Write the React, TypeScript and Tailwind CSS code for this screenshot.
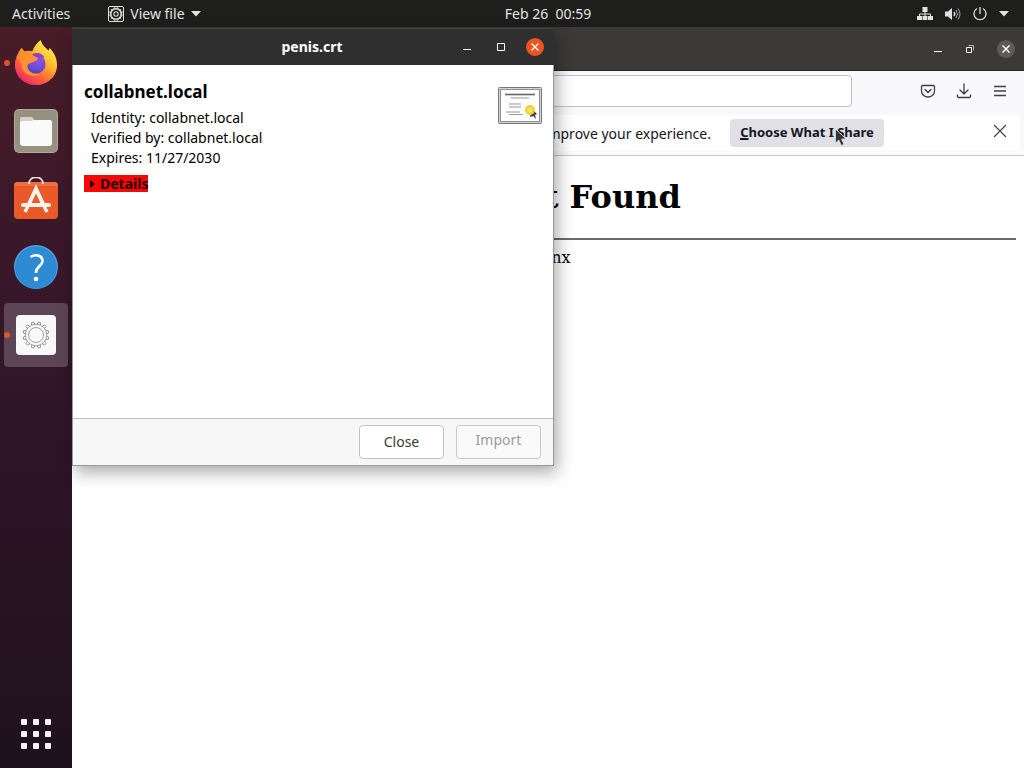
import type { ReactNode } from "react";

const gearTeeth = [0, 30, 60, 90, 120, 150, 180, 210, 240, 270, 300, 330];

function Gear({ className, stroke, body }: { className: string; stroke: number; body: number }) {
  return (
    <svg viewBox="0 0 32 32" className={className} fill="none" stroke="currentColor" strokeWidth={stroke}>
      <circle cx="16" cy="16" r="11.5" />
      <circle cx="16" cy="16" r={body} />
      {gearTeeth.map((a) => (
        <path key={a} d="M14.2 4.6 L14.8 2 H17.2 L17.8 4.6" transform={`rotate(${a + 15} 16 16)`} />
      ))}
    </svg>
  );
}

function FirefoxIcon() {
  return (
    <svg viewBox="0 0 46 48" className="h-[46px] w-11">
      <defs>
        <linearGradient id="ffBody" x1="0.8" y1="0.1" x2="0.2" y2="0.95">
          <stop offset="0" stopColor="#fff04a" />
          <stop offset="0.35" stopColor="#ffb52b" />
          <stop offset="0.65" stopColor="#ff6a33" />
          <stop offset="1" stopColor="#f0246f" />
        </linearGradient>
        <radialGradient id="ffGlobe" cx="0.6" cy="0.2" r="0.9">
          <stop offset="0" stopColor="#a34ce8" />
          <stop offset="0.6" stopColor="#6a4fd8" />
          <stop offset="1" stopColor="#4a3bb0" />
        </radialGradient>
        <linearGradient id="ffHead" x1="0" y1="0" x2="1" y2="1">
          <stop offset="0" stopColor="#ff8a2a" />
          <stop offset="1" stopColor="#ff9b33" />
        </linearGradient>
      </defs>
      <path
        d="M28 0c1 5 5 8 8 11 1-1 1-2 1-3 5 5 8 11 8 18 0 12-10 21-22 21S1 38 1 26c0-6 2-11 6-15l1-3c1 2 2 3 3 4 3-1 6-1 8 0 2-5 5-9 9-12z"
        fill="url(#ffBody)"
      />
      <circle cx="23" cy="25" r="10" fill="url(#ffGlobe)" />
      <path d="M17 16c5-4 13-3 15 3-4-2-6-1-7 1z" fill="#8b3fd9" />
      <path
        d="M3 18c1-4 3-8 5-10 1 2 3 4 4 4 4-1 6 1 8 4 2 2 5 2 5 3 0 2-3 3-5 4-3 1-6 2-6 4 0 7 7 10 13 8-6 5-18 2-19-8-1-5-3-7-5-9z"
        fill="url(#ffHead)"
      />
    </svg>
  );
}

function FilesIcon() {
  return (
    <svg viewBox="0 0 44 44" className="size-11">
      <rect width="44" height="44" rx="5" fill="#b0aa9a" />
      <rect x="1" y="1" width="42" height="42" rx="4" fill="#969080" />
      <path d="M6 10q0-2 2-2h10l3 4h-2v6H6z" fill="#d5d1c7" />
      <path d="M6 14q0-2 2-2h9l3-1h16q2 0 2 2v21q0 3-3 3H9q-3 0-3-3z" fill="#fafafa" />
    </svg>
  );
}

function SoftwareIcon() {
  return (
    <svg viewBox="0 0 44 44" className="size-11">
      <rect y="5" width="44" height="37" rx="4" fill="#e9592a" />
      <path d="M0 9q0-4 4-4h36q4 0 4 4z" fill="#ef7046" />
      <path d="M15 7c0-9 14-9 14 0" fill="none" stroke="#f3d9cd" strokeWidth="2" />
      <g fill="none" stroke="#fdf1ec" strokeWidth="4">
        <path d="M14 29 22 12l8 17" />
        <path d="M9 28h26" strokeLinecap="round" strokeWidth="4" />
        <path d="m14 29-3 6M30 29l3 6" strokeWidth="3.5" />
      </g>
    </svg>
  );
}

function HelpIcon() {
  return (
    <svg viewBox="0 0 44 44" className="size-11">
      <circle cx="22" cy="22" r="22" fill="#4fa6e4" />
      <circle cx="22" cy="22.5" r="21" fill="#2c8bd3" />
      <path d="M16.500 12c5-3 12-2 12 4 0 5-7 6-6.500 12" fill="none" stroke="#fff" strokeWidth="2.600" />
      <circle cx="22" cy="34" r="2.300" fill="#fff" />
    </svg>
  );
}

function CertificateIcon() {
  return (
    <svg viewBox="0 0 44 38" className="h-[38px] w-11 shrink-0">
      <rect x="0.5" y="0.5" width="43" height="36" rx="1" fill="#d4d4d4" stroke="#777" />
      <rect x="2.5" y="2.5" width="39" height="32" fill="#fcfcfc" stroke="#909090" />
      <path d="M7 7.500h30" stroke="#666" strokeWidth="1.600" />
      <path d="M13 11h18M11 17h12M11 20h12M8 25h14M11 27.500h14" stroke="#999" />
      <path d="m33 24-1 6 3-1 3 3-1-4 2-1-4-4z" fill="#34405c" />
      <circle cx="32" cy="23" r="5" fill="#f2d22e" />
      <circle cx="32" cy="23" r="2.500" fill="#f8e268" />
    </svg>
  );
}

function DockItem({ label, active, running, children }: { label: string; active?: boolean; running?: boolean; children: ReactNode }) {
  return (
    <button
      aria-label={label}
      className={`relative flex size-16 items-center justify-center rounded ${active ? "bg-[#5c4656]" : ""}`}
    >
      {running && <span className="absolute left-0 top-[29px] size-[6px] rounded-full bg-[#e0522a]" />}
      {children}
    </button>
  );
}

function TopBar() {
  return (
    <header className="grid h-[27px] shrink-0 grid-cols-[1fr_auto_1fr] items-center bg-[#1e1e1d] pl-[72px] text-sm text-[#e2e2e2]">
      <div className="-ml-[60px] flex items-center gap-[38px]">
        <button>Activities</button>
        <button className="flex items-center gap-[6px]">
          <span className="flex size-4 items-center justify-center rounded-xs border border-[#e2e2e2]">
            <Gear className="size-[14px]" stroke={2.4} body={5} />
          </span>
          View file
          <svg viewBox="0 0 10 6" className="h-[6px] w-[10px] fill-current"><path d="M0 0h10L5 5.500z" /></svg>
        </button>
      </div>
      <button className="whitespace-pre">Feb 26  00:59</button>
      <button aria-label="System" className="mr-[15px] flex items-center gap-3 justify-self-end">
        <svg viewBox="0 0 16 14" className="h-[14px] w-4" fill="currentColor">
          <path d="M5.500 0h5v5h-5zM0 9h5v4H0zM5.600 9h4.800v4H5.600zM11 9h5v4h-5z" />
          <path d="M8 4v5M2.500 10V7h11v3" fill="none" stroke="currentColor" />
        </svg>
        <svg viewBox="0 0 16 14" className="h-[14px] w-4" fill="none" stroke="currentColor">
          <path d="M0 4.500h3L7 1v12L3 9.500H0z" fill="currentColor" stroke="none" />
          <path d="M9 5q1.500 2 0 4" strokeWidth="1.500" />
          <path d="M11 3q3 4 0 8M13 1.500q4 5.500 0 11" opacity="0.7" />
        </svg>
        <svg viewBox="0 0 14 14" className="size-[14px]" fill="none" stroke="currentColor" strokeWidth="1.300">
          <path d="M7 0v7M4 1.500a6 6 0 1 0 6 0" />
        </svg>
        <svg viewBox="0 0 10 6" className="h-[6px] w-[10px] fill-current"><path d="M0 0h10L5 5.500z" /></svg>
      </button>
    </header>
  );
}

function Dock() {
  return (
    <nav className="flex w-[72px] shrink-0 flex-col items-center gap-1 bg-linear-to-b from-[#481c28] via-[#301529] via-50% to-[#1f111d] pb-[2px] pt-1">
      <DockItem label="Firefox" running><FirefoxIcon /></DockItem>
      <DockItem label="Files"><FilesIcon /></DockItem>
      <DockItem label="Software"><SoftwareIcon /></DockItem>
      <DockItem label="Help"><HelpIcon /></DockItem>
      <DockItem label="View file" active running>
        <span className="flex size-10 items-center justify-center rounded bg-[#f8f8f8] text-[#8d918d]">
          <Gear className="size-[30px]" stroke={0.9} body={8} />
        </span>
      </DockItem>
      <button aria-label="Show Applications" className="mt-auto flex size-16 items-center justify-center">
        <svg viewBox="0 0 30 30" className="size-[30px] fill-[#faf0f7]">
          {[0, 12, 24].map((y) => [0, 12, 24].map((x) => <rect key={`${x}-${y}`} x={x} y={y} width="6" height="6" rx="1" />))}
        </svg>
      </button>
    </nav>
  );
}

function Browser() {
  return (
    <main className="flex min-w-0 flex-1 flex-col bg-white">
      <div className="flex h-11 items-center justify-end gap-[22px] border-b border-[#242424] bg-[#3b3a39] pr-[9px] text-white">
        <button aria-label="Minimize">
          <svg viewBox="0 0 10 10" className="size-[10px]" stroke="currentColor"><path d="M1 7.500h8" /></svg>
        </button>
        <button aria-label="Restore">
          <svg viewBox="0 0 10 10" className="size-[10px]" fill="none" stroke="currentColor">
            <path d="M1.500 3.500h5v5h-5z" />
            <path d="M3.500 1.500h5v5" opacity="0.6" />
          </svg>
        </button>
        <button aria-label="Close window" className="flex size-[18px] items-center justify-center rounded-full bg-[#5d5c5a]">
          <svg viewBox="0 0 8 8" className="size-2" stroke="currentColor" strokeWidth="1.500"><path d="m0.500 0.500 7 7m0-7-7 7" /></svg>
        </button>
      </div>

      <div className="flex h-10 items-center bg-[#f9f9fb] pr-4 text-[#3f3f46]">
        <input aria-label="Address" className="ml-40 mr-17 h-8 min-w-0 flex-1 rounded border border-[#c2c2c4] bg-white px-2" />
        <div className="flex items-center gap-5">
          <button aria-label="Save to Pocket">
            <svg viewBox="0 0 16 16" className="size-4" fill="none" stroke="currentColor" strokeWidth="1.300" strokeLinecap="round" strokeLinejoin="round">
              <path d="M2.500 2.500h11q1 0 1 1V8a6.500 6 0 0 1-13 0V3.500q0-1 1-1z" />
              <path d="m5 6.500 3 3 3-3" />
            </svg>
          </button>
          <button aria-label="Downloads">
            <svg viewBox="0 0 16 16" className="size-4" fill="none" stroke="currentColor" strokeWidth="1.300" strokeLinecap="round" strokeLinejoin="round">
              <path d="M8 1v10M4 7l4 4 4-4M1.500 12v1.500q0 1 1 1h11q1 0 1-1V12" />
            </svg>
          </button>
          <button aria-label="Menu">
            <svg viewBox="0 0 16 16" className="size-4" stroke="currentColor" strokeWidth="1.300"><path d="M2 3.500h12M2 8h12M2 12.500h12" /></svg>
          </button>
        </div>
      </div>

      <div className="border-b border-[#c8c8ca] bg-[#f9f9fb] px-1 pb-1 pt-1">
        <div className="flex h-9 items-center rounded bg-white pr-[13px] text-[#15141a]">
          <div className="flex w-[635px] min-w-0 justify-end overflow-hidden whitespace-nowrap pt-px text-sm">
            improve your experience.
          </div>
          <button className="relative ml-[19px] h-7 w-[154px] shrink-0 whitespace-nowrap rounded bg-[#e0e0e6] text-[13px] font-bold">
            <span className="underline decoration-2">C</span>hoose What I Share
            <svg viewBox="0 0 12 18" className="absolute left-[105px] top-[9px] h-[18px] w-3">
              <path d="M0.500 1v14l3.300-3 2.500 5.500 2.600-1.200L6.500 11H11z" fill="#333" stroke="#ddd" strokeWidth="0.800" />
            </svg>
          </button>
          <button aria-label="Dismiss" className="-mt-1 ml-auto text-[#444]">
            <svg viewBox="0 0 14 14" className="size-[14px]" stroke="currentColor" strokeWidth="1.200"><path d="m1 1 12 12m0-12L1 13" /></svg>
          </button>
        </div>
      </div>

      <div className="px-2 pt-[21px] font-[DejaVu_Serif,serif] text-black">
        <h1 className="text-center text-[32px] font-bold leading-10">404 Not Found</h1>
        <hr className="mt-[21px] border-t-2 border-[#6b6b6b]" />
        <p className="mt-2 text-center text-base leading-5">nginx</p>
      </div>
    </main>
  );
}

function CertificateDialog() {
  return (
    <section
      role="dialog"
      aria-label="penis.crt"
      className="absolute left-[72px] top-[1px] flex h-[438px] w-[482px] flex-col border border-t-0 border-[#999] bg-white text-black shadow-[3px_6px_16px_rgba(0,0,0,0.35)]"
    >
      <div className="-mx-px flex h-[37px] shrink-0 items-center border-t border-[#454443] bg-[#302f2f] pr-[10px] text-white">
        <h2 className="flex-1 pl-[90px] text-center text-sm font-bold">penis.crt</h2>
        <div className="flex items-center gap-6">
          <button aria-label="Minimize">
            <svg viewBox="0 0 10 10" className="size-[10px]" stroke="currentColor"><path d="M1 7.500h8" /></svg>
          </button>
          <button aria-label="Maximize">
            <svg viewBox="0 0 10 10" className="size-[10px]" fill="none" stroke="currentColor"><path d="M1.500 1.500h7v7h-7z" /></svg>
          </button>
          <button aria-label="Close window" className="-ml-1 flex size-[18px] items-center justify-center rounded-full bg-[#e95420]">
            <svg viewBox="0 0 8 8" className="size-2" stroke="currentColor" strokeWidth="1.300"><path d="m0.500 0.500 7 7m0-7-7 7" /></svg>
          </button>
        </div>
      </div>

      <div className="flex flex-1 items-start justify-between px-[11px] pt-[15px]">
        <div>
          <h3 className="text-[17px] font-bold leading-6">collabnet.local</h3>
          <div className="mt-1 pl-[7px] text-sm leading-5">
            <p>Identity: collabnet.local</p>
            <p>Verified by: collabnet.local</p>
            <p>Expires: 11/27/2030</p>
          </div>
          <button className="mt-[7px] flex h-[17px] items-center gap-1 bg-[#f40808] pl-[6px] text-sm font-bold leading-4 text-[#220000]">
            <svg viewBox="0 0 6 8" className="h-2 w-[6px] fill-current"><path d="M0 0l5 4-5 4z" /></svg>
            Details
          </button>
        </div>
        <div className="pt-[7px]"><CertificateIcon /></div>
      </div>

      <div className="flex h-[47px] shrink-0 items-center justify-end gap-3 border-t border-[#c0bfbd] bg-[#f7f7f7] pr-3 text-sm">
        <button className="h-[34px] w-[85px] rounded border border-[#c4c3c1] bg-white text-[#3a3a3a]">Close</button>
        <button disabled className="h-[34px] w-[85px] rounded border border-[#c9c8c6] bg-[#fafafa] pb-1 text-[#9b9b9b]">Import</button>
      </div>
    </section>
  );
}

export default function App() {
  return (
    <div className="flex min-h-screen flex-col overflow-hidden font-[Noto_Sans,sans-serif]">
      <TopBar />
      <div className="relative flex flex-1">
        <Dock />
        <Browser />
        <CertificateDialog />
      </div>
    </div>
  );
}
